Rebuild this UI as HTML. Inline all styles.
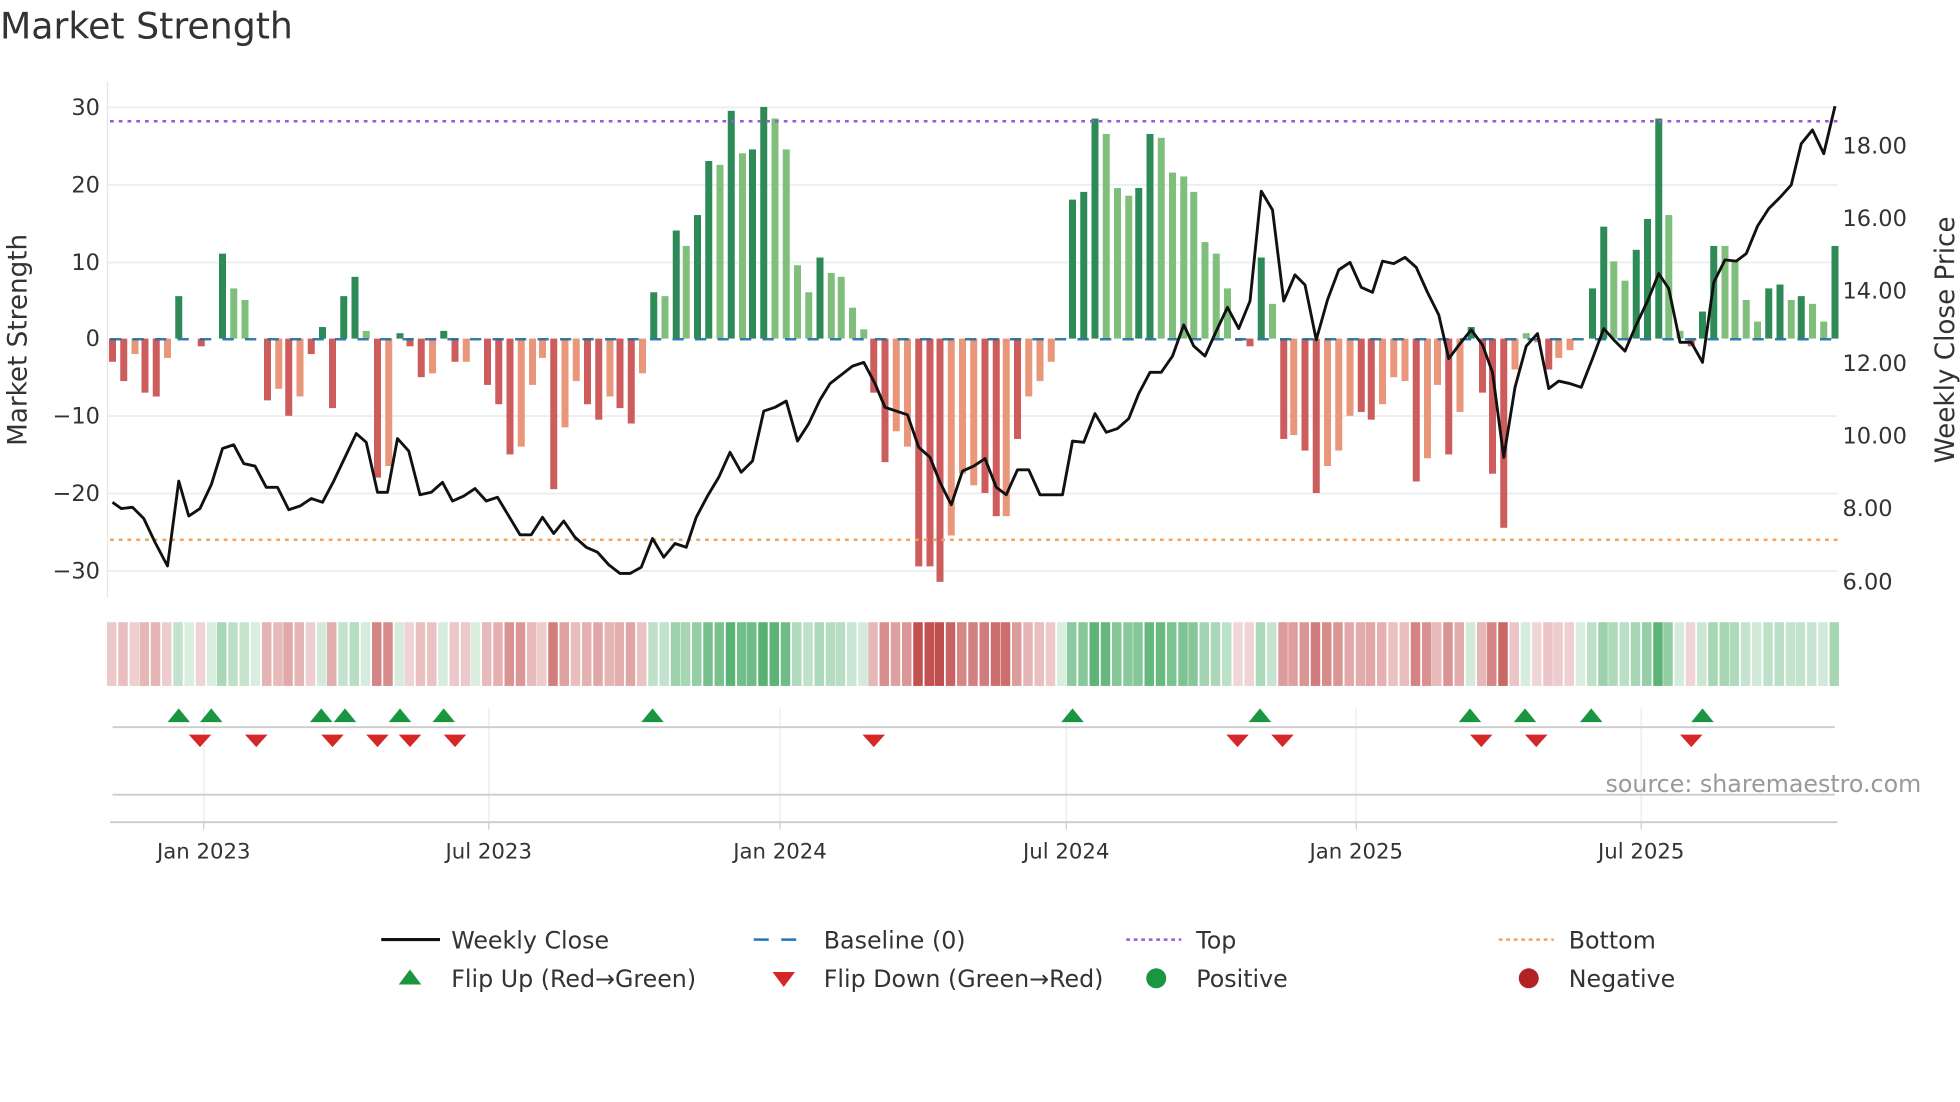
<!DOCTYPE html>
<html><head><meta charset="utf-8"><style>
html,body{margin:0;padding:0;background:#fff;}
svg{display:block;font-family:"DejaVu Sans","Liberation Sans",sans-serif;}
</style></head><body>
<svg id="s" width="1960" height="1102" viewBox="0 0 1568 882" preserveAspectRatio="none" xmlns="http://www.w3.org/2000/svg">
<rect width="1568" height="882" fill="#fff"/>
<text x="0" y="31" font-size="29" fill="#333">Market Strength</text>
<g stroke="#eceef3" stroke-width="1.5">
<line x1="86" y1="86" x2="1470" y2="86"/><line x1="86" y1="148" x2="1470" y2="148"/><line x1="86" y1="210" x2="1470" y2="210"/><line x1="86" y1="333" x2="1470" y2="333"/><line x1="86" y1="395" x2="1470" y2="395"/><line x1="86" y1="457" x2="1470" y2="457"/>
</g>
<line x1="86" y1="65" x2="86" y2="478" stroke="#e6e6e6"/>
<g font-size="18" fill="#333" text-anchor="end">
<text x="80" y="92">30</text><text x="80" y="154">20</text><text x="80" y="216">10</text><text x="80" y="277">0</text><text x="80" y="339">−10</text><text x="80" y="401">−20</text><text x="80" y="463">−30</text>
</g>
<g font-size="18" fill="#333">
<text x="1474" y="123">18.00</text><text x="1474" y="181">16.00</text><text x="1474" y="239">14.00</text><text x="1474" y="297">12.00</text><text x="1474" y="355">10.00</text><text x="1474" y="413">8.00</text><text x="1474" y="472">6.00</text>
</g>
<text transform="translate(21,272) rotate(-90)" font-size="21" fill="#333" text-anchor="middle">Market Strength</text>
<text transform="translate(1563,272) rotate(-90)" font-size="21" fill="#333" text-anchor="middle">Weekly Close Price</text>
<g id="bars"></g>
<line x1="88" y1="271.5" x2="1470" y2="271.5" stroke="#1f6fa4" stroke-width="2" stroke-dasharray="9,9" opacity="0.9"/>
<line x1="88" y1="97" x2="1470" y2="97" stroke="#9b59d6" stroke-width="2" stroke-dasharray="3,4"/>
<line x1="88" y1="432" x2="1470" y2="432" stroke="#f0a35e" stroke-width="2" stroke-dasharray="3,4"/>
<polyline id="price" fill="none" stroke="#111" stroke-width="2.3" stroke-linejoin="round"/>
<g id="strip"></g>
<g stroke="#eceef3" stroke-width="1.2">
<line x1="163" y1="567" x2="163" y2="658"/><line x1="391" y1="567" x2="391" y2="658"/><line x1="624" y1="567" x2="624" y2="658"/><line x1="853" y1="567" x2="853" y2="658"/><line x1="1085" y1="567" x2="1085" y2="658"/><line x1="1313" y1="567" x2="1313" y2="658"/>
</g>
<line x1="90" y1="582" x2="1468" y2="582" stroke="#ccc" stroke-width="1.5"/>
<line x1="90" y1="636" x2="1468" y2="636" stroke="#ccc" stroke-width="1.5"/>
<line x1="88" y1="658" x2="1470" y2="658" stroke="#ccc" stroke-width="1.5"/>
<g stroke="#ccc"><line x1="163" y1="658" x2="163" y2="664"/><line x1="391" y1="658" x2="391" y2="664"/><line x1="624" y1="658" x2="624" y2="664"/><line x1="853" y1="658" x2="853" y2="664"/><line x1="1085" y1="658" x2="1085" y2="664"/><line x1="1313" y1="658" x2="1313" y2="664"/></g>
<g id="marks"></g>
<g font-size="17" fill="#333" text-anchor="middle">
<text x="163" y="687">Jan 2023</text><text x="391" y="687">Jul 2023</text><text x="624" y="687">Jan 2024</text><text x="853" y="687">Jul 2024</text><text x="1085" y="687">Jan 2025</text><text x="1313" y="687">Jul 2025</text>
</g>
<text x="1537" y="634" font-size="19" fill="#999" text-anchor="end">source: sharemaestro.com</text>
<g font-size="19" fill="#333">
<line x1="305" y1="752" x2="352" y2="752" stroke="#111" stroke-width="2.5"/><text x="361" y="759">Weekly Close</text>
<line x1="603" y1="752" x2="647" y2="752" stroke="#1f77b4" stroke-width="2" stroke-dasharray="12,10"/><text x="659" y="759">Baseline (0)</text>
<line x1="901" y1="752" x2="945" y2="752" stroke="#9b59d6" stroke-width="2" stroke-dasharray="3,3"/><text x="957" y="759">Top</text>
<line x1="1199" y1="752" x2="1243" y2="752" stroke="#f0a35e" stroke-width="2" stroke-dasharray="3,3"/><text x="1255" y="759">Bottom</text>
<polygon points="319,788 328,776 337,788" fill="#1a9641"/><text x="361" y="790">Flip Up (Red→Green)</text>
<polygon points="618,778 636,778 627,790" fill="#d62728"/><text x="659" y="790">Flip Down (Green→Red)</text>
<circle cx="925" cy="783" r="8" fill="#1a9641"/><text x="957" y="790">Positive</text>
<circle cx="1223" cy="783" r="8" fill="#b22222"/><text x="1255" y="790">Negative</text>
</g>
</svg>
<script>
var NS="http://www.w3.org/2000/svg";
var B=[[90,-3,'R'],[99,-5.5,'R'],[108,-2,'O'],[116,-7,'R'],[125,-7.5,'R'],[134,-2.5,'O'],[143,5.5,'D'],[152,0,'Z'],[161,-1,'R'],[170,0,'Z'],[178,11,'D'],[187,6.5,'L'],[196,5,'L'],[205,0,'Z'],[214,-8,'R'],[223,-6.5,'O'],[231,-10,'R'],[240,-7.5,'O'],[249,-2,'R'],[258,1.5,'D'],[266,-9,'R'],[275,5.5,'D'],[284,8,'D'],[293,1,'L'],[302,-18,'R'],[311,-16.5,'O'],[320,0.7,'D'],[328,-1,'R'],[337,-5,'R'],[346,-4.5,'O'],[355,1,'D'],[364,-3,'R'],[373,-3,'O'],[381,0,'Z'],[390,-6,'R'],[399,-8.5,'R'],[408,-15,'R'],[417,-14,'O'],[426,-6,'O'],[434,-2.5,'O'],[443,-19.5,'R'],[452,-11.5,'O'],[461,-5.5,'O'],[470,-8.5,'R'],[479,-10.5,'R'],[488,-7.5,'O'],[496,-9,'R'],[505,-11,'R'],[514,-4.5,'O'],[523,6,'D'],[532,5.5,'L'],[541,14,'D'],[549,12,'L'],[558,16,'D'],[567,23,'D'],[576,22.5,'L'],[585,29.5,'D'],[594,24,'L'],[602,24.5,'D'],[611,30,'D'],[620,28.5,'L'],[629,24.5,'L'],[638,9.5,'L'],[647,6,'L'],[656,10.5,'D'],[665,8.5,'L'],[673,8,'L'],[682,4,'L'],[691,1.2,'L'],[699,-7,'R'],[708,-16,'R'],[717,-12,'O'],[726,-14,'O'],[735,-29.5,'R'],[744,-29.5,'R'],[752,-31.5,'R'],[761,-25.5,'O'],[770,-17.5,'O'],[779,-19,'O'],[788,-20,'R'],[797,-23,'R'],[805,-23,'O'],[814,-13,'R'],[823,-7.5,'O'],[832,-5.5,'O'],[841,-3,'O'],[850,0,'Z'],[858,18,'D'],[867,19,'D'],[876,28.5,'D'],[885,26.5,'L'],[894,19.5,'L'],[903,18.5,'L'],[911,19.5,'D'],[920,26.5,'D'],[929,26,'L'],[938,21.5,'L'],[947,21,'L'],[955,19,'L'],[964,12.5,'L'],[973,11,'L'],[982,6.5,'L'],[991,-0.3,'R'],[1000,-1,'R'],[1009,10.5,'D'],[1018,4.5,'L'],[1027,-13,'R'],[1035,-12.5,'O'],[1044,-14.5,'R'],[1053,-20,'R'],[1062,-16.5,'O'],[1071,-14.5,'O'],[1080,-10,'O'],[1089,-9.5,'R'],[1097,-10.5,'R'],[1106,-8.5,'O'],[1115,-5,'O'],[1124,-5.5,'O'],[1133,-18.5,'R'],[1142,-15.5,'O'],[1150,-6,'O'],[1159,-15,'R'],[1168,-9.5,'O'],[1177,1.5,'D'],[1186,-7,'R'],[1194,-17.5,'R'],[1203,-24.5,'R'],[1212,-4,'O'],[1221,0.7,'L'],[1230,-0.5,'O'],[1239,-4,'R'],[1247,-2.5,'O'],[1256,-1.5,'O'],[1265,0,'Z'],[1274,6.5,'D'],[1283,14.5,'D'],[1291,10,'L'],[1300,7.5,'L'],[1309,11.5,'D'],[1318,15.5,'D'],[1327,28.5,'D'],[1335,16,'L'],[1344,1,'L'],[1353,-1,'R'],[1362,3.5,'D'],[1371,12,'D'],[1380,12,'L'],[1388,10,'L'],[1397,5,'L'],[1406,2.2,'L'],[1415,6.5,'D'],[1424,7,'D'],[1433,5,'L'],[1441,5.5,'D'],[1450,4.5,'L'],[1459,2.2,'L'],[1468,12,'D']];
var C={D:'#2e8b57',L:'#7fbf7b',R:'#cd5c5c',O:'#e9967a'};
var g=document.getElementById('bars'),st=document.getElementById('strip');
B.forEach(function(b){
 var h=b[1]*6.18;
 if(b[2]!='Z'){var r=document.createElementNS(NS,'rect');r.setAttribute('x',b[0]-2.8);r.setAttribute('width',5.6);
 r.setAttribute('y',h>0?271-h:271);r.setAttribute('height',Math.abs(h));r.setAttribute('fill',C[b[2]]);g.appendChild(r);}
 var s=document.createElementNS(NS,'rect');s.setAttribute('x',b[0]-4.4);s.setAttribute('width',7.6);s.setAttribute('y',498);s.setAttribute('height',51);
 var a=0.18+0.62*Math.min(Math.abs(b[1])/30,1);
 s.setAttribute('fill',b[1]>=0?'#2e9e4f':'#b22222');s.setAttribute('fill-opacity',a);st.appendChild(s);
});
var P=[[90,402],[97,407],[106,406],[115,415],[124,434],[134,453],[143,385],[151,413],[160,407],[169,388],[178,359],[187,356],[195,371],[204,373],[213,390],[222,390],[231,408],[240,405],[249,399],[258,402],[267,385],[276,366],[285,347],[293,354],[302,394],[310,394],[318,351],[327,361],[336,396],[345,394],[354,386],[362,401],[371,397],[380,391],[389,401],[398,398],[407,413],[416,428],[425,428],[434,414],[443,427],[451,417],[460,430],[469,438],[478,442],[487,452],[496,459],[504,459],[513,454],[522,431],[531,446],[540,435],[549,438],[557,414],[566,397],[575,382],[584,362],[593,378],[602,369],[611,329],[620,326],[629,321],[638,353],[647,339],[656,320],[664,307],[673,300],[682,293],[691,290],[700,307],[708,326],[717,329],[726,332],[735,358],[744,366],[752,386],[761,404],[770,377],[779,373],[788,367],[797,390],[805,396],[814,376],[823,376],[832,396],[841,396],[850,396],[858,353],[867,354],[876,331],[885,346],[894,343],[903,335],[911,315],[920,298],[929,298],[938,285],[947,260],[955,277],[964,285],[973,265],[982,246],[991,263],[1000,241],[1009,153],[1018,168],[1027,241],[1036,220],[1044,228],[1053,272],[1062,240],[1071,216],[1080,210],[1089,230],[1098,234],[1106,209],[1115,211],[1124,206],[1133,214],[1142,234],[1151,252],[1159,287],[1168,275],[1177,264],[1186,276],[1194,298],[1203,366],[1212,310],[1221,277],[1230,267],[1239,311],[1247,305],[1256,307],[1265,310],[1274,287],[1283,263],[1291,272],[1300,281],[1309,260],[1318,241],[1327,219],[1335,231],[1344,274],[1353,274],[1362,290],[1371,226],[1380,208],[1389,209],[1397,203],[1406,181],[1415,167],[1424,158],[1433,148],[1441,115],[1450,104],[1459,123],[1468,85]];
document.getElementById('price').setAttribute('points',P.map(function(p){return p.join(',')}).join(' '));
var m=document.getElementById('marks'),ups=[143,169,257,276,320,355,522,858,1008,1176,1220,1273,1362],dns=[160,205,266,302,328,364,699,990,1026,1185,1229,1353];
ups.forEach(function(x){var p=document.createElementNS(NS,'polygon');p.setAttribute('points',(x-9)+',578 '+x+',567 '+(x+9)+',578');p.setAttribute('fill','#1a9641');m.appendChild(p);});
dns.forEach(function(x){var p=document.createElementNS(NS,'polygon');p.setAttribute('points',(x-9)+',588 '+(x+9)+',588 '+x+',598');p.setAttribute('fill','#d62728');m.appendChild(p);});
</script>
</body></html>
